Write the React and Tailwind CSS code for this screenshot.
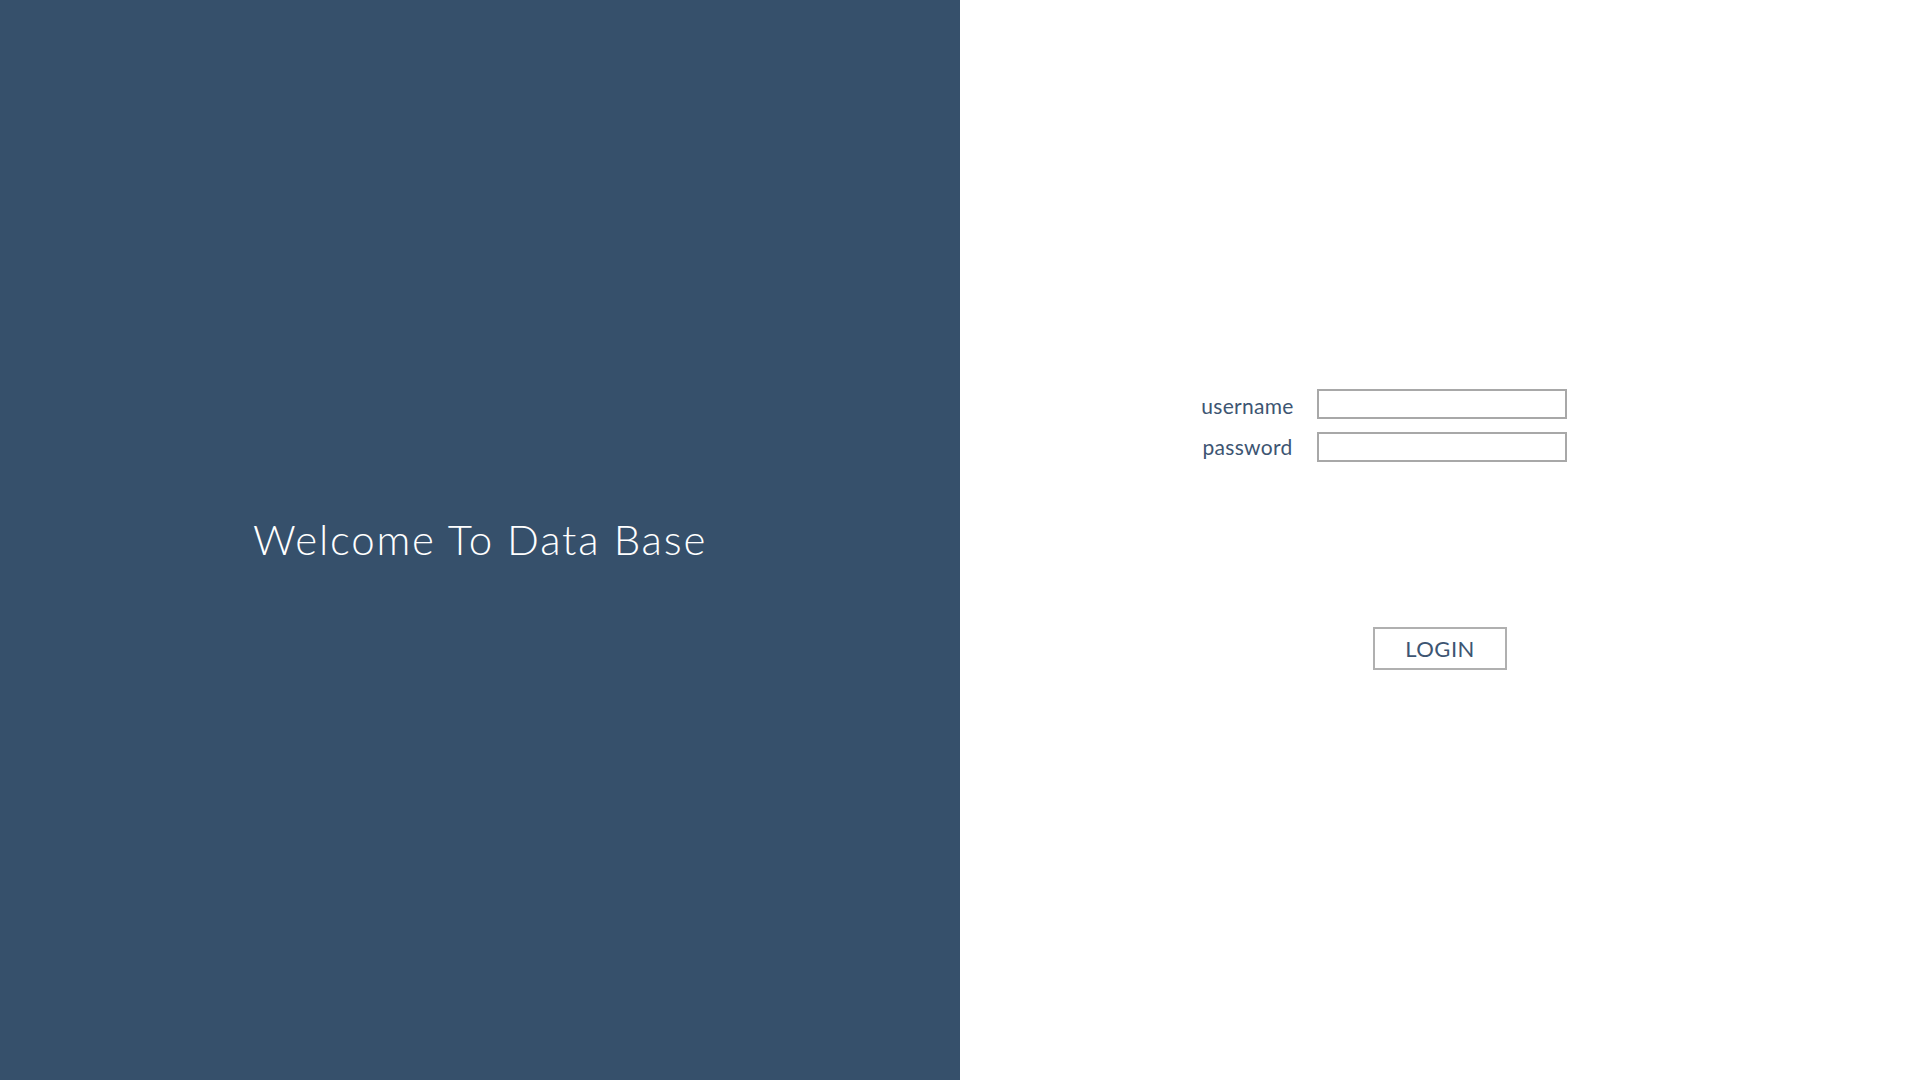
export default function App() {
  return (
    <div className="flex w-full h-[1080px] bg-white">
      <div className="w-[960px] h-full bg-[#36506b] flex items-center justify-center">
        <h1 className="text-white text-[42px] font-light tracking-[1.8px] mb-[2px]" style={{ fontFamily: '"Lato", "Liberation Sans", sans-serif' }}>
          Welcome To Data Base
        </h1>
      </div>
      <div className="flex-1 h-full flex flex-col items-start pt-[389px] pl-[230px]" style={{ fontFamily: '"Lato", "Liberation Sans", sans-serif' }}>
        <div className="grid grid-cols-[115px_250px] grid-rows-[30px_30px] gap-x-[12px] gap-y-[13px]">
          <div className="h-[30px] text-[21px] text-[#3d5572] font-normal text-center leading-[34px] tracking-[0.3px]">username</div>
          <input className="h-[30px] border-2 border-[#a8a8a8] outline-none" />
          <div className="h-[30px] text-[21px] text-[#3d5572] font-normal text-center leading-[30px] tracking-[0.3px]">password</div>
          <input type="password" className="h-[30px] border-2 border-[#a8a8a8] outline-none" />
        </div>
        <button className="mt-[165px] ml-[183px] w-[134px] h-[43px] border-2 border-[#b0b0b0] text-[22px] text-[#3d5572] font-normal tracking-[0.5px]">
          LOGIN
        </button>
      </div>
    </div>
  );
}
